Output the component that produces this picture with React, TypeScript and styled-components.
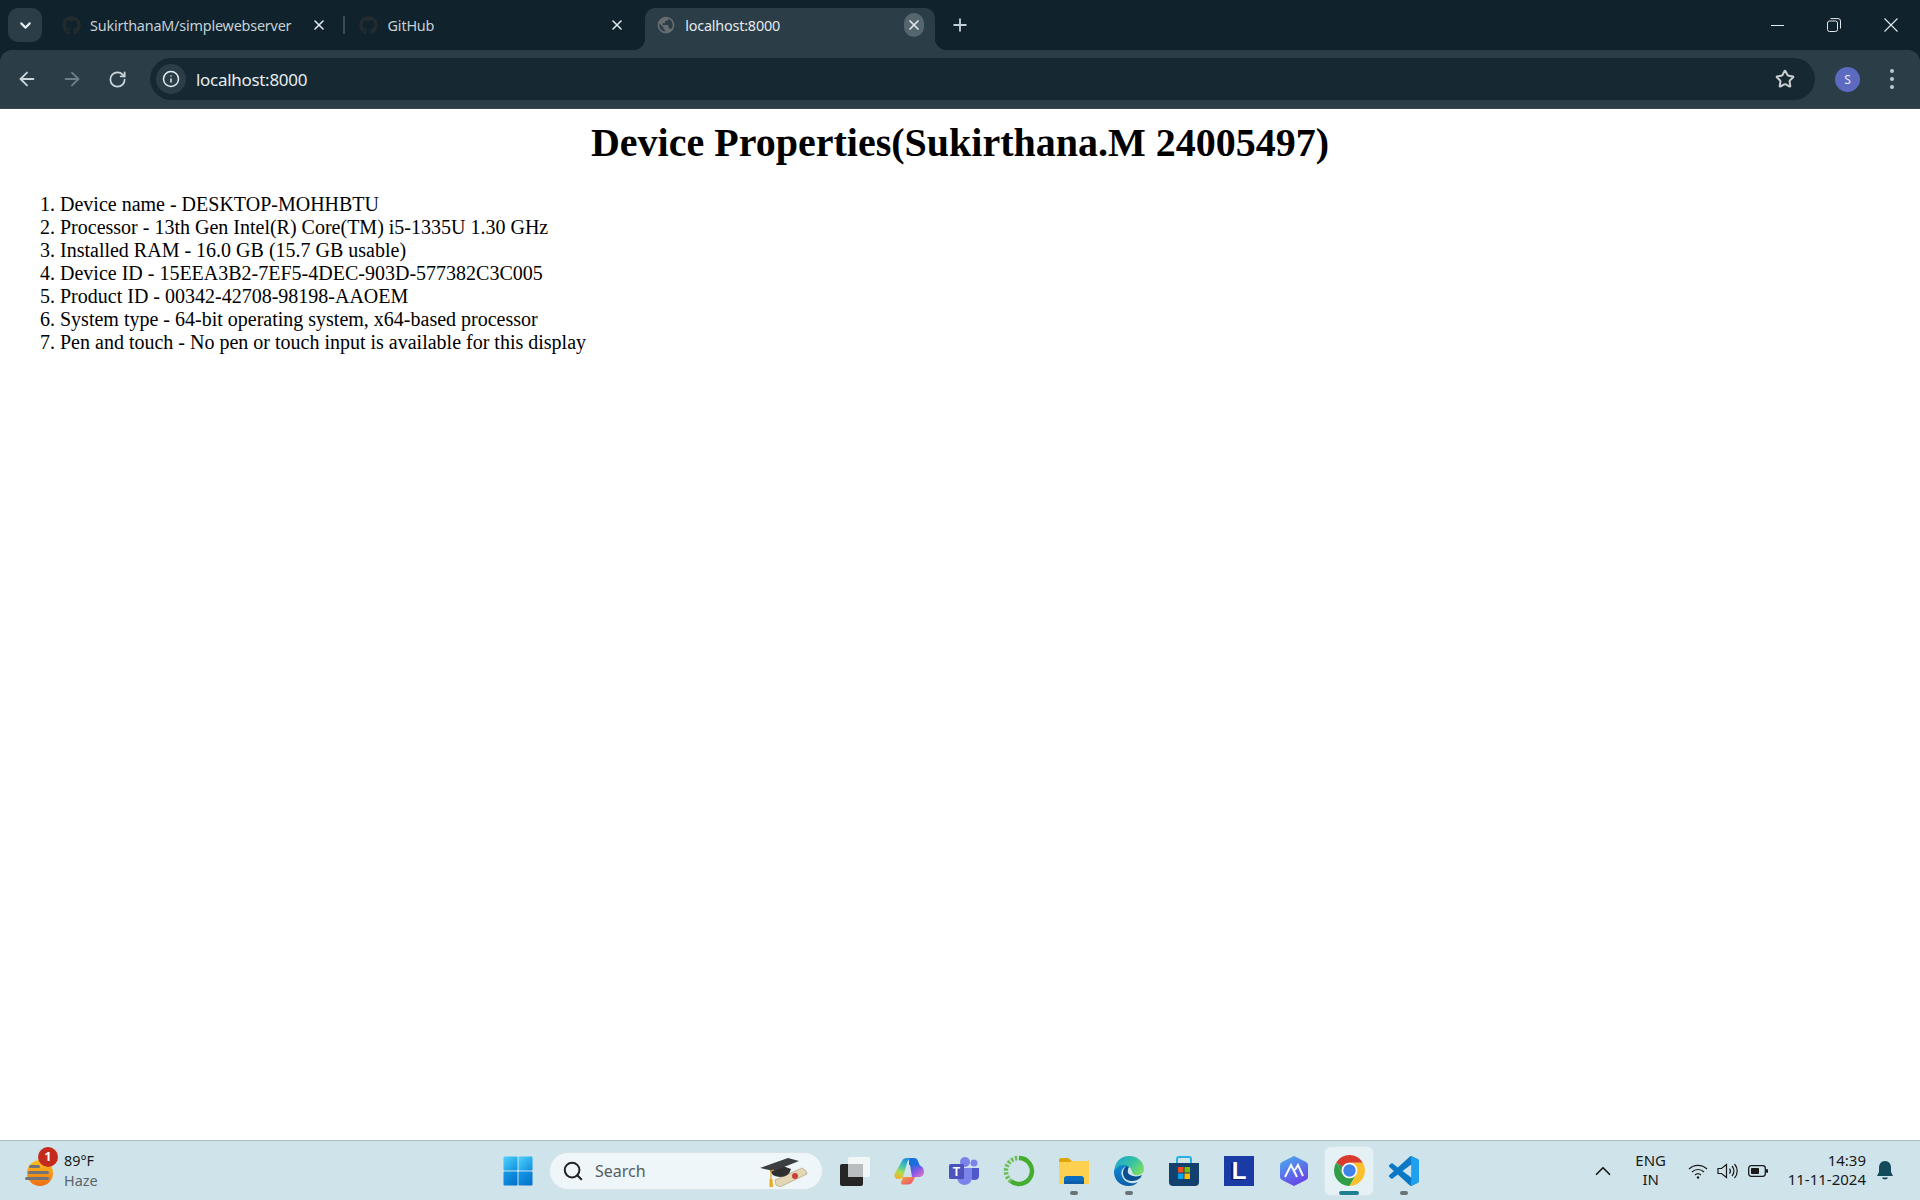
import React from "react";
import styled, { createGlobalStyle } from "styled-components";
import { ArrowLeft, ArrowRight, RotateCw, Info, Star, X, Plus, ChevronDown, ChevronUp, Search as SearchIcon } from "lucide-react";
import { FaGithub } from "react-icons/fa";
import { MdPublic } from "react-icons/md";

const Global = createGlobalStyle`
  html, body { margin: 0; padding: 0; background: #fff; }
  body { width: 1920px; height: 1200px; overflow: hidden; }
`;
const UI = `"Noto Sans", "Open Sans", sans-serif`;

const Screen = styled.div`
  width: 1920px; height: 1200px; display: flex; flex-direction: column; background: #fff;
`;
const BrowserHead = styled.header`
  background: #10232d; font-family: ${UI};
`;
const TabStrip = styled.div`
  height: 50px; display: flex; align-items: flex-end;
`;
const MenuButton = styled.div`
  width: 34px; height: 34px; margin: 0 8px 8px 8px; border-radius: 10px; background: #2b3e48; color: #e6edf0;
  display: flex; align-items: center; justify-content: center;
`;
const Tabs = styled.div`
  display: flex; align-items: flex-end; gap: 7.6px; height: 42px;
`;
const Tab = styled.div<{ $active?: boolean }>`
  position: relative; width: 290px; height: 42px; box-sizing: border-box; padding: 0 9px 8px 11px;
  display: flex; align-items: center; gap: 9px; border-radius: 10px 10px 0 0;
  background: ${p => (p.$active ? "#2b3e48" : "transparent")};
  ${p => p.$active && `
    &::before, &::after { content: ""; position: absolute; bottom: 0; width: 12px; height: 12px; }
    &::before { left: -12px; background: radial-gradient(circle at 0 0, transparent 12px, #2b3e48 12.5px); }
    &::after { right: -12px; background: radial-gradient(circle at 100% 0, transparent 12px, #2b3e48 12.5px); }
  `}
`;
const Favicon = styled.span`
  width: 20px; height: 20px; flex: none; display: flex; align-items: center; justify-content: center;
`;
const TabTitle = styled.span<{ $active?: boolean }>`
  flex: 1; font-size: 14.4px; letter-spacing: -0.2px; white-space: nowrap; overflow: hidden;
  color: ${p => (p.$active ? "#e3e9ec" : "#c6d0d5")};
`;
const TabClose = styled.div<{ $active?: boolean }>`
  width: 20px; height: 24px; margin: 0 2px; border-radius: 12px; display: flex; align-items: center; justify-content: center;
  color: #dfe6e9; background: ${p => (p.$active ? "#56666f" : "transparent")};
`;
const TabSep = styled.div`
  position: absolute; right: -5px; top: 8px; width: 2px; height: 18px; background: #3a4c56;
`;
const NewTab = styled.div`
  width: 28px; height: 28px; margin: 0 0 11px 11px; color: #c3d0d7; display: flex; align-items: center; justify-content: center;
`;
const WindowControls = styled.div`
  margin-left: auto; height: 50px; display: flex; align-items: center; padding-right: 1px; color: #e4e9ec;
`;
const WinBtn = styled.div`
  width: 57px; height: 48px; display: flex; align-items: center; justify-content: center;
`;
const MinLine = styled.span`
  display: block; width: 13px; height: 1px; background: currentColor; margin-left: 2px;
`;
const Toolbar = styled.div`
  height: 58px; background: #2b3e48; display: flex; align-items: center;
  border-bottom: 1px solid #3a4750; border-radius: 12px 12px 0 0;
`;
const NavGroup = styled.div`
  display: flex; align-items: center; padding-left: 9px; gap: 9px; margin-right: 15px;
`;
const NavBtn = styled.div<{ $dim?: boolean }>`
  width: 36px; height: 36px; display: flex; align-items: center; justify-content: center;
  color: ${p => (p.$dim ? "#6d7e87" : "#c9d6dc")};
`;
const Omnibox = styled.div`
  width: 1665px; height: 42px; border-radius: 21px; background: #162832; display: flex; align-items: center;
  padding: 0 14px 0 6px; box-sizing: border-box;
`;
const InfoChip = styled.div`
  width: 30px; height: 30px; border-radius: 50%; background: #2b3e48; color: #e6ecef; display: flex; align-items: center; justify-content: center;
`;
const Url = styled.span`
  margin-left: 10px; flex: 1; font-size: 17px; letter-spacing: -0.3px; color: #e6ecef;
`;
const StarBtn = styled.div`
  color: #c9ced1; display: flex; align-items: center; margin-right: 6px;
`;
const Avatar = styled.div`
  width: 25px; height: 25px; margin-left: 20px; border-radius: 50%; background: #5c6bc0; color: #e8eaf6; font-size: 12px;
  display: flex; align-items: center; justify-content: center;
`;
const Dots = styled.div`
  margin-left: 30px; display: flex; flex-direction: column; gap: 4px;
  & > i { display: block; width: 4px; height: 4px; border-radius: 50%; background: #b9cbd4; }
`;
const Content = styled.main`
  flex: 1; padding: 11px 10px 10px; font-family: "Liberation Serif", serif; color: #000; background: #fff; font-size: 20px;
`;
const Heading = styled.h1`
  margin: 0 0 27px; font-size: 40px; line-height: 46px; font-weight: 700; text-align: center;
`;
const Props = styled.ol`
  margin: 0; padding-left: 50px; line-height: 23px;
`;
const Taskbar = styled.footer`
  height: 60px; box-sizing: border-box; border-top: 1px solid #a9bbc4; background: #cfe3ea;
  display: grid; grid-template-columns: 1fr auto 1fr; align-items: center; font-family: ${UI};
`;
const Weather = styled.div`
  display: flex; align-items: center; padding-left: 24px; gap: 10px;
`;
const WeatherIcon = styled.div`
  position: relative; width: 30px; height: 30px; margin-top: 4px;
`;
const Badge = styled.span`
  position: absolute; left: 14px; top: -11px; width: 20px; height: 20px; border-radius: 50%; background: #c42b1c;
  color: #fff; font-size: 12px; font-weight: 700; display: flex; align-items: center; justify-content: center;
`;
const WeatherText = styled.div`
  display: flex; flex-direction: column; font-size: 14.4px; line-height: 20px; color: #1a1a1a;
  & > span + span { color: #5b6468; }
`;
const Center = styled.div`
  display: flex; align-items: center; gap: 7px; padding-left: 2px;
`;
const TaskItem = styled.div<{ $active?: boolean }>`
  position: relative; width: 48px; height: 48px; border-radius: 6px; display: flex; align-items: center; justify-content: center;
  background: ${p => (p.$active ? "#e6f1f5" : "transparent")};
  box-shadow: ${p => (p.$active ? "0 0 0 1px #d8e6ec" : "none")};
`;
const Pip = styled.span<{ $active?: boolean }>`
  position: absolute; bottom: 0; left: 50%; transform: translateX(-50%); height: 4px; border-radius: 2px;
  width: ${p => (p.$active ? "20px" : "8px")}; background: ${p => (p.$active ? "#1f8093" : "#6c7377")};
`;
const SearchBox = styled.div`
  position: relative; width: 274px; height: 38px; box-sizing: border-box; border-radius: 19px; background: #eff6f9;
  border: 1px solid #d7e3e8; display: flex; align-items: center; padding-left: 12px; gap: 11px; color: #222;
`;
const SearchLabel = styled.span`
  font-size: 16px; color: #555c60;
`;
const CapSlot = styled.div`
  position: absolute; right: 14px; top: 4px; width: 48px; height: 30px;
`;
const Tray = styled.div`
  display: flex; align-items: center; justify-content: flex-end; padding-right: 27px; color: #1a1a1a;
`;
const Caret = styled.div`
  display: flex; margin-right: 15px;
`;
const Lang = styled.div`
  width: 40px; text-align: center; font-size: 15px; line-height: 19px; margin-right: 17px; padding-bottom: 1px;
`;
const TrayIcons = styled.div`
  display: flex; align-items: center; gap: 9px; margin-right: 20px;
`;
const Clock = styled.div`
  text-align: right; font-size: 15px; line-height: 19px; margin-right: 11px; padding-bottom: 1px;
`;
const LBox = styled.div`
  width: 30px; height: 30px; background: #1a3aa6; color: #fff; font-family: "Liberation Sans", sans-serif; font-weight: 700; font-size: 24px;
  display: flex; align-items: center; justify-content: center; text-shadow: -2px 1px 0 #0d1f5e;
`;

const WinLogo = () => (
  <svg width="30" height="30" viewBox="0 0 30 30">
    <defs>
      <linearGradient id="w1" x1="0" y1="0" x2="1" y2="1"><stop offset="0" stopColor="#4fd3fb" /><stop offset="1" stopColor="#0f8fe0" /></linearGradient>
      <linearGradient id="w2" x1="0" y1="0" x2="1" y2="1"><stop offset="0" stopColor="#139ae8" /><stop offset="1" stopColor="#0570c9" /></linearGradient>
    </defs>
    <rect x="0.5" y="0.5" width="14" height="14" rx="1" fill="url(#w1)" />
    <rect x="15.5" y="0.5" width="14" height="14" rx="1" fill="url(#w1)" />
    <rect x="0.5" y="15.5" width="14" height="14" rx="1" fill="url(#w2)" />
    <rect x="15.5" y="15.5" width="14" height="14" rx="1" fill="url(#w2)" />
  </svg>
);
const GradCap = () => (
  <svg width="48" height="30" viewBox="0 0 48 30">
    <path d="M16 28 L15 23 L42 11 Q47 13 47 17 L20 30 Z" fill="#e4d6b4" stroke="#a8977a" strokeWidth=".6" />
    <circle cx="35" cy="19" r="3" fill="#c8403a" />
    <path d="M10 12 Q10 19 20 20 Q29 20 31 12 L20 8 Z" fill="#2d2f31" />
    <path d="M0 11 L28 1 L39 4 L14 14 Z" fill="#3b3f42" />
    <path d="M14 13 L11 14 L11 22" stroke="#e0a21b" strokeWidth="1.2" fill="none" />
    <path d="M9.5 22 L12.5 22 L13 30 L9.5 30 Z" fill="#e8ad1e" />
  </svg>
);
const TaskView = () => (
  <svg width="32" height="30" viewBox="0 0 32 30">
    <rect x="2" y="8" width="23" height="22" rx="2" fill="#252525" />
    <rect x="10" y="1" width="22" height="20" rx="1.5" fill="#f4f7f8" fillOpacity=".9" />
    <rect x="10" y="8" width="15" height="13" fill="#b9bdbf" />
  </svg>
);
const Copilot = () => (
  <svg width="30" height="28" viewBox="0 0 30 28">
    <defs>
      <linearGradient id="c1" x1=".6" y1="0" x2=".3" y2="1"><stop offset="0" stopColor="#1f8fe0" /><stop offset=".4" stopColor="#45c8b0" /><stop offset=".7" stopColor="#b5d94a" /><stop offset="1" stopColor="#f6b02c" /></linearGradient>
      <linearGradient id="c2" x1="0" y1="0" x2="1" y2="1"><stop offset="0" stopColor="#1667d9" /><stop offset=".5" stopColor="#8a5ae6" /><stop offset="1" stopColor="#f07ac0" /></linearGradient>
      <linearGradient id="c3" x1="0" y1="0" x2="1" y2="1"><stop offset="0" stopColor="#f7a03a" /><stop offset="1" stopColor="#e8487a" /></linearGradient>
    </defs>
    <path d="M16 8 H24 Q30 9 30 15 Q30 19 26 20 H18 Z" fill="url(#c2)" />
    <path d="M15 1 H20 Q23 1 24 4 L27 12 Q24 8 20 8 H15 Z" fill="#1a6fdc" />
    <path d="M8 4 Q9 1 13 1 H17 Q14 2 13 6 L9 20 Q8 22 5 22 H3 Q0 21 0.5 17 Z" fill="url(#c1)" />
    <path d="M9 20 H21 L19 24 Q17 28 13 27.5 H8 Q6 26 8 23 Z" fill="url(#c3)" />
  </svg>
);
const Teams = () => (
  <svg width="30" height="28" viewBox="0 0 30 28">
    <circle cx="25" cy="6" r="3.5" fill="#7b83eb" />
    <circle cx="16" cy="5" r="5" fill="#7b83eb" />
    <path d="M21 11 H30 V19 Q30 23 25 23 Q22 23 21 21 Z" fill="#5059c9" />
    <path d="M8 11 H23 V21 Q22 28 15 28 Q9 27 8 21 Z" fill="#7b83eb" />
    <rect x="0" y="7" width="15" height="15" rx="1.5" fill="#4b53bc" />
    <text x="7.5" y="19" textAnchor="middle" fontFamily="Liberation Sans, sans-serif" fontSize="12" fontWeight="700" fill="#fff">T</text>
  </svg>
);
const GreenRing = () => (
  <svg width="32" height="32" viewBox="0 0 32 32">
    <path d="M16 3 A13 13 0 1 1 8 26.3" fill="none" stroke="#43ad2d" strokeWidth="4.5" />
    <path d="M8 26.3 A13 13 0 0 1 16 3" fill="none" stroke="#6cbf58" strokeWidth="4.5" strokeDasharray="2.4 1.6" />
  </svg>
);
const Folder = () => (
  <svg width="30" height="28" viewBox="0 0 30 28">
    <path d="M0 3 Q0 1 2 1 H9 L13 4 H30 V8 H0 Z" fill="#dfa406" />
    <path d="M0 5 H10 L13 4 H29 Q30 4 30 5 V26 Q30 27 29 27 H1 Q0 27 0 26 Z" fill="#fdd04f" />
    <path d="M5 27 V22 Q5 19 8 19 H22 Q25 19 25 22 V27 Z" fill="#0b6cc0" />
    <rect x="5" y="24" width="20" height="3" fill="#0d5ea8" />
  </svg>
);
const Edge = () => (
  <svg width="30" height="30" viewBox="0 0 30 30">
    <defs>
      <linearGradient id="e1" x1="0" y1="0" x2="1" y2=".6"><stop offset="0" stopColor="#1ba1d8" /><stop offset=".6" stopColor="#36c3a0" /><stop offset="1" stopColor="#78dc6b" /></linearGradient>
      <linearGradient id="e2" x1="0" y1="0" x2="0" y2="1"><stop offset="0" stopColor="#118ad6" /><stop offset="1" stopColor="#0b5ea8" /></linearGradient>
    </defs>
    <path d="M15 0 C24 0 30 6 30 13 C30 18 25 20 21 19 C17 18 19 13 15 11 C10 9 3 12 0 17 C0 7 6 0 15 0 Z" fill="url(#e1)" />
    <path d="M0 16 C2 10 9 7 14 10 C9 11 6 15 8 20 C10 26 17 29 24 26 C21 29 18 30 15 30 C6 30 0 24 0 16 Z" fill="url(#e2)" />
    <path d="M13 10 C9 12 8 17 10 21 C12 25 18 26 23 24 C26 23 27 21 28 19 C26 20 22 21 19 20 C15 19 13 17 14 14 C14 12 15 11 15 11 Z" fill="#0a4f92" />
  </svg>
);
const Store = () => (
  <svg width="30" height="30" viewBox="0 0 30 30">
    <path d="M8 7 V3 Q8 1 10 1 H20 Q22 1 22 3 V7" fill="none" stroke="#27b0e6" strokeWidth="2" />
    <path d="M0 7 H30 V26 Q30 30 26 30 H4 Q0 30 0 26 Z" fill="#12406f" />
    <rect x="9" y="11" width="5.5" height="5.5" fill="#f25022" />
    <rect x="15.5" y="11" width="5.5" height="5.5" fill="#7fba00" />
    <rect x="9" y="17.5" width="5.5" height="5.5" fill="#00a4ef" />
    <rect x="15.5" y="17.5" width="5.5" height="5.5" fill="#ffb900" />
  </svg>
);
const Mark = () => (
  <svg width="28" height="30" viewBox="0 0 28 30">
    <defs>
      <linearGradient id="m1" x1=".2" y1="0" x2=".7" y2="1"><stop offset="0" stopColor="#4aa8ee" /><stop offset="1" stopColor="#6a3fe6" /></linearGradient>
    </defs>
    <path d="M14 0 L26 6 Q28 7 28 9 V21 Q28 23 26 24 L14 30 L2 24 Q0 23 0 21 V9 Q0 7 2 6 Z" fill="url(#m1)" />
    <path d="M5 21 L11 9 L17 21 M15 14 L18 9 L23 20" fill="none" stroke="#fff" strokeWidth="2" strokeOpacity=".95" />
  </svg>
);
const Chrome = () => (
  <svg width="31" height="31" viewBox="4 4 40 40">
    <path d="M6.68 14 A20 20 0 0 1 41.32 14 H24 A10 10 0 0 0 15.34 19 Z" fill="#db3a2e" />
    <path d="M6.68 14 A20 20 0 0 0 24 44 L32.66 29 A10 10 0 0 1 15.34 29 Z" fill="#2f9e46" />
    <path d="M6.68 14 L15.34 29 A10 10 0 0 1 15.34 19 Z" fill="#2f9e46" />
    <path d="M41.32 14 A20 20 0 0 1 24 44 L32.66 29 A10 10 0 0 0 24 14 Z" fill="#fbc02d" />
    <circle cx="24" cy="24" r="10" fill="#fff" />
    <circle cx="24" cy="24" r="8" fill="#3f83ea" />
  </svg>
);
const VSCode = () => (
  <svg width="30" height="30" viewBox="0 0 100 100">
    <path d="M70.9 99.3a6.2 6.2 0 0 0 4.96-.19l20.59-9.9a6.25 6.25 0 0 0 3.55-5.64V16.43a6.25 6.25 0 0 0-3.55-5.64L75.86.88a6.23 6.23 0 0 0-7.1 1.21L29.35 38.04 12.18 25.01a4.16 4.16 0 0 0-5.32.24L1.36 30.25a4.17 4.17 0 0 0 0 6.16L16.25 50 1.36 63.59a4.17 4.17 0 0 0 0 6.16l5.5 5a4.16 4.16 0 0 0 5.32.24l17.17-13.03 39.41 35.95a6.2 6.2 0 0 0 2.14 1.39zM75 27.3 45.1 50 75 72.7V27.3z" fill="#0a78c6" fillRule="evenodd" />
    <path d="M72 1 L96.5 10.8a6.25 6.25 0 0 1 3.5 5.6V83.6a6.25 6.25 0 0 1-3.5 5.6L72 99 L75 72.7 V27.3 Z" fill="#1fa0ee" />
  </svg>
);
const SunHaze = () => (
  <svg width="30" height="30" viewBox="0 0 30 30">
    <defs>
      <linearGradient id="s1" x1="0" y1="0" x2="0" y2="1"><stop offset="0" stopColor="#fbc421" /><stop offset="1" stopColor="#ef6c12" /></linearGradient>
    </defs>
    <circle cx="16" cy="15" r="13" fill="url(#s1)" />
    <rect x="5" y="7" width="11" height="3" rx="1.5" fill="#6e7478" />
    <rect x="4" y="13" width="21" height="3" rx="1.5" fill="#6e7478" />
    <rect x="1" y="19" width="24" height="3" rx="1.5" fill="#6e7478" />
  </svg>
);
const Wifi = () => (
  <svg width="20" height="18" viewBox="0 0 20 18" fill="none" stroke="#1a1a1a" strokeWidth="1.2">
    <path d="M1 7 A13 13 0 0 1 19 7" /><path d="M4 10 A8.5 8.5 0 0 1 16 10" /><path d="M7 13 A4.5 4.5 0 0 1 13 13" />
    <circle cx="10" cy="15.5" r="1.2" fill="#1a1a1a" stroke="none" />
  </svg>
);
const Speaker = () => (
  <svg width="22" height="18" viewBox="0 0 22 18" fill="none" stroke="#1a1a1a" strokeWidth="1.2">
    <path d="M1 6.5 H4.5 L9.5 2.5 V15.5 L4.5 11.5 H1 Z" />
    <path d="M12.5 6.5 A4 4 0 0 1 12.5 11.5" /><path d="M15 4 A7.5 7.5 0 0 1 15 14" /><path d="M17.5 2 A10.5 10.5 0 0 1 17.5 16" />
  </svg>
);
const Battery = () => (
  <svg width="20" height="14" viewBox="0 0 20 14">
    <rect x=".7" y="1.7" width="16.6" height="10.6" rx="2.5" fill="none" stroke="#1a1a1a" strokeWidth="1.3" />
    <rect x="3" y="4" width="8" height="6" rx=".8" fill="#1a1a1a" />
    <rect x="18" y="5" width="2" height="4" rx="1" fill="#1a1a1a" />
  </svg>
);
const Bell = () => (
  <svg width="16" height="20" viewBox="0 0 16 20" fill="#144b5a">
    <path d="M8 0 C12 0 14 3 14 7 V11 L16 15 H0 L2 11 V7 C2 3 4 0 8 0 Z" /><path d="M5 16.5 H11 C10.5 19 5.5 19 5 16.5 Z" />
  </svg>
);
const RestoreIcon = () => (
  <svg width="14" height="14" viewBox="0 0 14 14" fill="none" stroke="currentColor" strokeWidth="1">
    <rect x=".5" y="3" width="10" height="10.5" rx="2" /><path d="M3.5 .6 H11 Q13.5 .6 13.5 3 V10.5" />
  </svg>
);
const CloseIcon = () => (
  <svg width="14" height="14" viewBox="0 0 14 14" fill="none" stroke="currentColor" strokeWidth="1.1">
    <path d="M.5 .5 L13.5 13.5 M13.5 .5 L.5 13.5" />
  </svg>
);

const items = [
  "Device name - DESKTOP-MOHHBTU",
  "Processor - 13th Gen Intel(R) Core(TM) i5-1335U 1.30 GHz",
  "Installed RAM - 16.0 GB (15.7 GB usable)",
  "Device ID - 15EEA3B2-7EF5-4DEC-903D-577382C3C005",
  "Product ID - 00342-42708-98198-AAOEM",
  "System type - 64-bit operating system, x64-based processor",
  "Pen and touch - No pen or touch input is available for this display",
];

export default function App() {
  return (
    <Screen>
      <Global />
      <BrowserHead>
        <TabStrip>
          <MenuButton><ChevronDown size={17} strokeWidth={3} /></MenuButton>
          <Tabs>
            <Tab>
              <Favicon><FaGithub size={19} color="#242b2f" /></Favicon>
              <TabTitle>SukirthanaM/simplewebserver</TabTitle>
              <TabClose><X size={16} strokeWidth={2.4} /></TabClose>
              <TabSep />
            </Tab>
            <Tab>
              <Favicon><FaGithub size={19} color="#242b2f" /></Favicon>
              <TabTitle>GitHub</TabTitle>
              <TabClose><X size={16} strokeWidth={2.4} /></TabClose>
            </Tab>
            <Tab $active>
              <Favicon><MdPublic size={20} color="#666c70" /></Favicon>
              <TabTitle $active>localhost:8000</TabTitle>
              <TabClose $active><X size={16} strokeWidth={2.6} /></TabClose>
            </Tab>
          </Tabs>
          <NewTab><Plus size={20} strokeWidth={2.2} /></NewTab>
          <WindowControls>
            <WinBtn><MinLine /></WinBtn>
            <WinBtn><RestoreIcon /></WinBtn>
            <WinBtn><CloseIcon /></WinBtn>
          </WindowControls>
        </TabStrip>
        <Toolbar>
          <NavGroup>
            <NavBtn><ArrowLeft size={22} strokeWidth={2} /></NavBtn>
            <NavBtn $dim><ArrowRight size={22} strokeWidth={2} /></NavBtn>
            <NavBtn><RotateCw size={19} strokeWidth={2.2} /></NavBtn>
          </NavGroup>
          <Omnibox>
            <InfoChip><Info size={18} strokeWidth={2} /></InfoChip>
            <Url>localhost:8000</Url>
            <StarBtn><Star size={20} strokeWidth={2.4} /></StarBtn>
          </Omnibox>
          <Avatar>S</Avatar>
          <Dots><i /><i /><i /></Dots>
        </Toolbar>
      </BrowserHead>
      <Content>
        <Heading>Device Properties(Sukirthana.M 24005497)</Heading>
        <Props>
          {items.map(t => <li key={t}>{t}</li>)}
        </Props>
      </Content>
      <Taskbar>
        <Weather>
          <WeatherIcon><SunHaze /><Badge>1</Badge></WeatherIcon>
          <WeatherText><span>89°F</span><span>Haze</span></WeatherText>
        </Weather>
        <Center>
          <TaskItem><WinLogo /></TaskItem>
          <SearchBox>
            <SearchIcon size={22} strokeWidth={2.2} />
            <SearchLabel>Search</SearchLabel>
            <CapSlot><GradCap /></CapSlot>
          </SearchBox>
          <TaskItem><TaskView /></TaskItem>
          <TaskItem><Copilot /></TaskItem>
          <TaskItem><Teams /></TaskItem>
          <TaskItem><GreenRing /></TaskItem>
          <TaskItem><Folder /><Pip /></TaskItem>
          <TaskItem><Edge /><Pip /></TaskItem>
          <TaskItem><Store /></TaskItem>
          <TaskItem><LBox>L</LBox></TaskItem>
          <TaskItem><Mark /></TaskItem>
          <TaskItem $active><Chrome /><Pip $active /></TaskItem>
          <TaskItem><VSCode /><Pip /></TaskItem>
        </Center>
        <Tray>
          <Caret><ChevronUp size={26} strokeWidth={1.6} /></Caret>
          <Lang>ENG<br />IN</Lang>
          <TrayIcons><Wifi /><Speaker /><Battery /></TrayIcons>
          <Clock>14:39<br />11-11-2024</Clock>
          <Bell />
        </Tray>
      </Taskbar>
    </Screen>
  );
}
